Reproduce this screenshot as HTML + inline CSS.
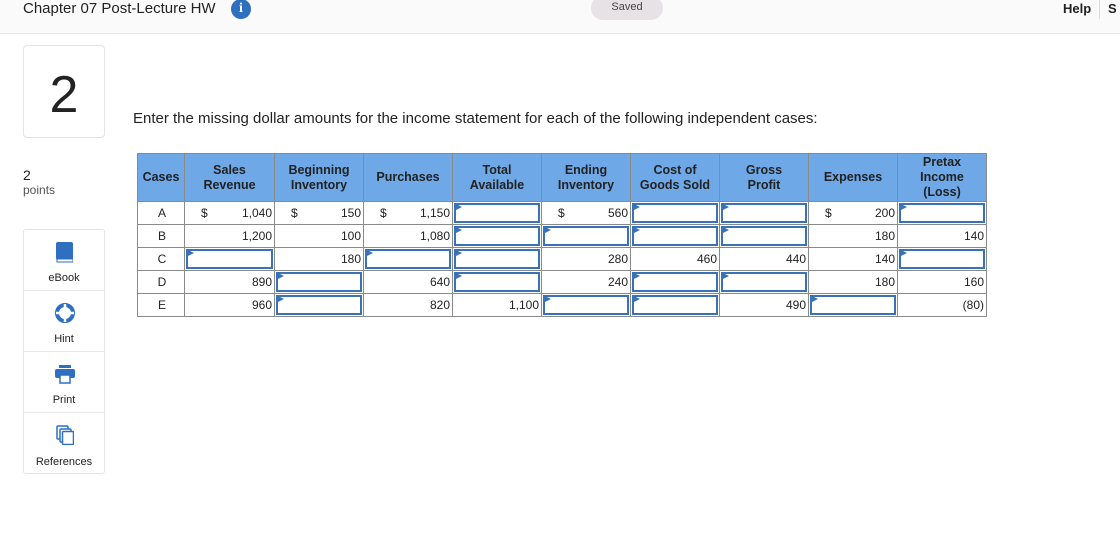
<!DOCTYPE html>
<html><head><meta charset="utf-8"><style>
*{margin:0;padding:0;box-sizing:border-box}
body{width:1120px;height:543px;background:#fff;font-family:"Liberation Sans",Arial,sans-serif;position:relative;overflow:hidden;color:#222}
.top{position:absolute;left:0;top:0;width:1120px;height:34px;background:#fafafa;border-bottom:1px solid #e8e8e8}
.title{position:absolute;left:23px;top:0px;font-size:15px;color:#222}
.info{position:absolute;left:231px;top:-1px;width:20px;height:20px;border-radius:50%;background:#2f6fc0;color:#fff;font:bold 14px "Liberation Serif",serif;text-align:center;line-height:20px}
.saved{position:absolute;left:591px;top:-4px;width:72px;height:24px;border-radius:12px;background:#e6e2e6;font-size:11px;color:#444;text-align:center;line-height:22px}
.help{position:absolute;left:1063px;top:1px;font-weight:bold;font-size:13px}
.sep{position:absolute;top:0;width:1px;height:19px;background:#ddd;left:1099px}
.s{position:absolute;left:1108px;top:1px;font-weight:bold;font-size:13px}
.qbox{position:absolute;left:23px;top:45px;width:82px;height:93px;border:1px solid #e4e4e4;border-radius:4px;font-size:52px;text-align:center;line-height:98px;color:#222}
.q{position:absolute;left:133px;top:110px;font-size:15px}
.pts{position:absolute;left:23px;top:167px;font-size:14px}
.pts small{display:block;font-size:12px;color:#555}
.side{position:absolute;left:23px;top:229px;width:82px;height:245px;border:1px solid #e4e4e4;border-radius:3px}
.side div{height:61px;border-bottom:1px solid #e8e8e8;position:relative;font-size:11px;text-align:center}
.side div:last-child{border:none}
.side span{position:absolute;left:0;right:0;bottom:6px}
table{position:absolute;left:137px;top:153px;border-collapse:collapse;table-layout:fixed;font-size:12px}
th{background:#6fa8e6;font-weight:bold;font-size:12.5px;border:1px solid #8a8a8a;height:48px;color:#222;line-height:15px}
td{border:1px solid #8a8a8a;height:23px;position:relative;text-align:right;padding:0 2px 0 4px}
td.c{text-align:center}
td.i{padding:0}
td.i:after{content:"";position:absolute;left:1px;top:1px;right:1px;bottom:1px;border:2px solid #3a72b8}
td.i:before{content:"";position:absolute;left:3px;top:3px;border-left:6px solid #3a72b8;border-top:3px solid transparent;border-bottom:3px solid transparent;width:0;height:0;transform:translateY(-1px)}
.d{position:absolute;left:16px;top:4px}
</style></head><body>
<div class="top"><div class="title">Chapter 07 Post-Lecture HW</div><div class="info">i</div><div class="saved">Saved</div><div class="sep"></div><div class="help">Help</div><div class="s">S</div></div>
<div class="qbox">2</div>
<div class="q">Enter the missing dollar amounts for the income statement for each of the following independent cases:</div>
<div class="pts">2<small>points</small></div>
<div class="side">
<div><svg style="position:absolute;left:32px;top:12px" width="17" height="21"><rect x="0" y="0" width="17" height="18" rx="2" fill="#2f6fc0"/><rect x="1" y="17" width="16" height="3" fill="#fff" stroke="#2f6fc0"/></svg><span>eBook</span></div>
<div><svg style="position:absolute;left:31px;top:12px" width="20" height="20"><circle cx="10" cy="10" r="8" fill="none" stroke="#2f6fc0" stroke-width="4"/><circle cx="10" cy="10" r="3.5" fill="#fff"/><path d="M10 1v4M10 15v4M1 10h4M15 10h4" stroke="#fff" stroke-width="2.5"/></svg><span>Hint</span></div>
<div><svg style="position:absolute;left:31px;top:13px" width="20" height="19"><rect x="4" y="0" width="12" height="3" fill="#2f6fc0"/><rect x="0" y="4" width="20" height="9" rx="2" fill="#2f6fc0"/><rect x="5" y="10" width="10" height="8" fill="#fff" stroke="#2f6fc0" stroke-width="1.5"/></svg><span>Print</span></div>
<div><svg style="position:absolute;left:32px;top:12px" width="18" height="20"><rect x="1" y="1" width="11" height="13" rx="1" fill="#fff" stroke="#2f6fc0" stroke-width="1.5"/><rect x="4" y="4" width="11" height="13" rx="1" fill="#fff" stroke="#2f6fc0" stroke-width="1.5"/><rect x="6.5" y="6.5" width="11" height="13" rx="1" fill="#fff" stroke="#2f6fc0" stroke-width="1.5"/></svg><span>References</span></div>
</div>
<table>
<colgroup><col style="width:47px"><col style="width:90px"><col style="width:89px"><col style="width:89px"><col style="width:89px"><col style="width:89px"><col style="width:89px"><col style="width:89px"><col style="width:89px"><col style="width:89px"></colgroup>
<tr><th>Cases</th><th>Sales<br>Revenue</th><th>Beginning<br>Inventory</th><th>Purchases</th><th>Total<br>Available</th><th>Ending<br>Inventory</th><th>Cost of<br>Goods Sold</th><th>Gross<br>Profit</th><th>Expenses</th><th>Pretax<br>Income<br>(Loss)</th></tr>
<tr><td class="c">A</td><td><span class="d">$</span>1,040</td><td><span class="d">$</span>150</td><td><span class="d">$</span>1,150</td><td class="i"></td><td><span class="d">$</span>560</td><td class="i"></td><td class="i"></td><td><span class="d">$</span>200</td><td class="i"></td></tr>
<tr><td class="c">B</td><td>1,200</td><td>100</td><td>1,080</td><td class="i"></td><td class="i"></td><td class="i"></td><td class="i"></td><td>180</td><td>140</td></tr>
<tr><td class="c">C</td><td class="i"></td><td>180</td><td class="i"></td><td class="i"></td><td>280</td><td>460</td><td>440</td><td>140</td><td class="i"></td></tr>
<tr><td class="c">D</td><td>890</td><td class="i"></td><td>640</td><td class="i"></td><td>240</td><td class="i"></td><td class="i"></td><td>180</td><td>160</td></tr>
<tr><td class="c">E</td><td>960</td><td class="i"></td><td>820</td><td>1,100</td><td class="i"></td><td class="i"></td><td>490</td><td class="i"></td><td>(80)</td></tr>
</table>
</body></html>
